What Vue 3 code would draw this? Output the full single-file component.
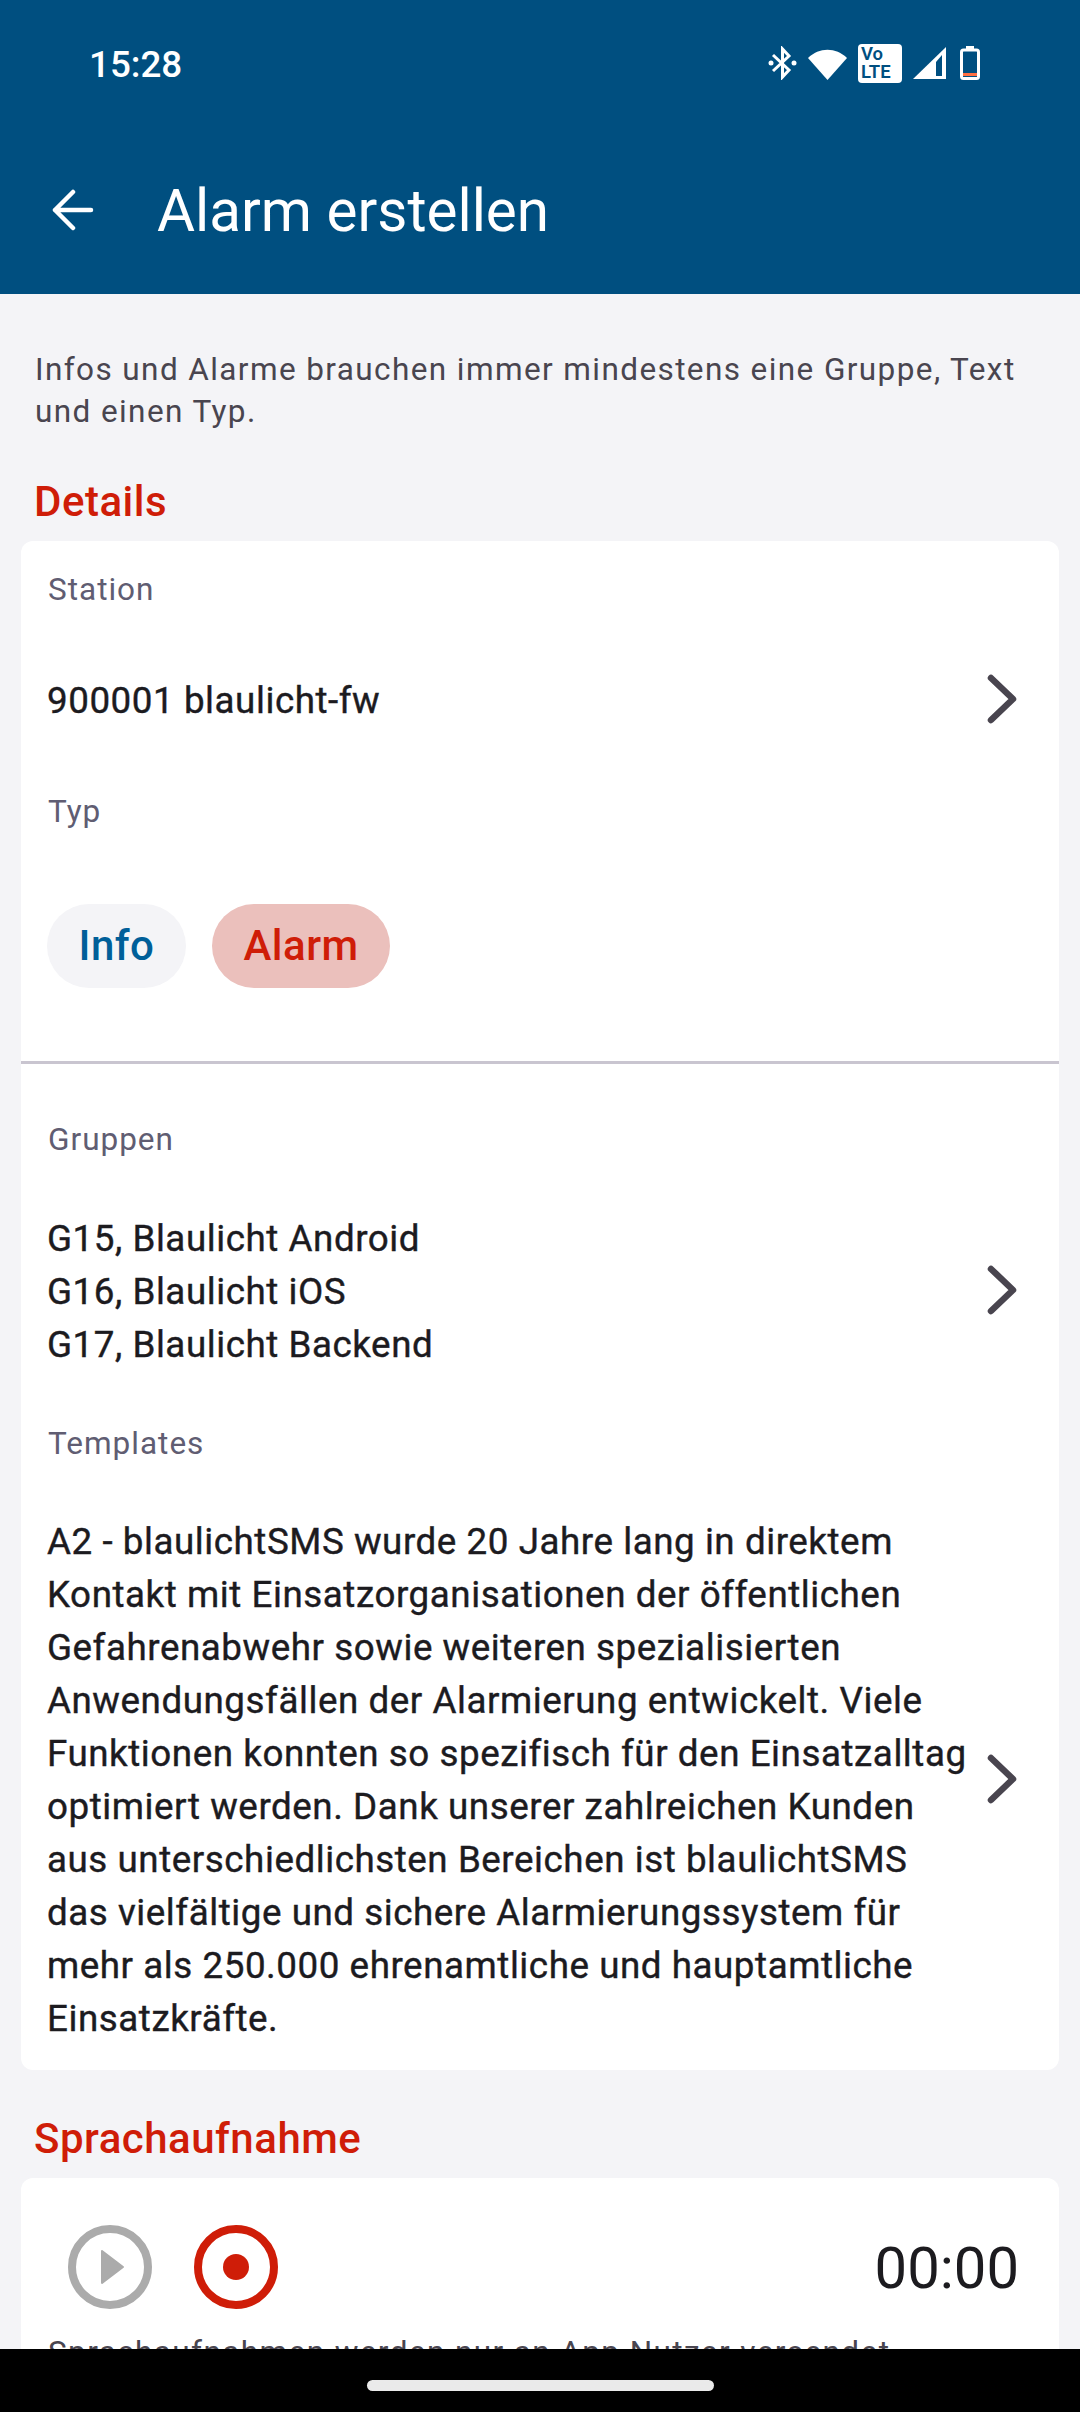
<script setup>
const groups = ['G15, Blaulicht Android', 'G16, Blaulicht iOS', 'G17, Blaulicht Backend']
const templateLines = [
  'A2 - blaulichtSMS wurde 20 Jahre lang in direktem',
  'Kontakt mit Einsatzorganisationen der öffentlichen',
  'Gefahrenabwehr sowie weiteren spezialisierten',
  'Anwendungsfällen der Alarmierung entwickelt. Viele',
  'Funktionen konnten so spezifisch für den Einsatzalltag',
  'optimiert werden. Dank unserer zahlreichen Kunden',
  'aus unterschiedlichsten Bereichen ist blaulichtSMS',
  'das vielfältige und sichere Alarmierungssystem für',
  'mehr als 250.000 ehrenamtliche und hauptamtliche',
  'Einsatzkräfte.'
]
</script>

<template>
  <div class="screen">
    <header class="appbar">
      <div class="status">
        <span class="time">15:28</span>
        <div class="status-icons">
          <svg viewBox="0 0 29 34" width="29" height="34">
            <path d="M5 9 L21 24 L14.5 31 L14.5 3 L21 10 L5 25" fill="none" stroke="#fff" stroke-width="3" />
            <circle cx="3" cy="17" r="2.5" fill="#fff" />
            <circle cx="26" cy="17" r="2.5" fill="#fff" />
          </svg>
          <svg viewBox="0 0 39 33" width="39" height="33">
            <path d="M0 11 C11 0 28 0 39 11 L19.5 33 Z" fill="#fff" />
          </svg>
          <div class="volte"><span>Vo</span><span>LTE</span></div>
          <svg viewBox="0 0 33 33" width="33" height="33">
            <path d="M0 32 L33 0 V32 Z" fill="#fff" />
            <path d="M23 15 L29 8 V29 H23 Z" fill="#004f80" />
          </svg>
          <svg class="batt" viewBox="0 0 20 34" width="20" height="34">
            <rect x="6" y="0" width="8" height="4" fill="#fff" />
            <rect x="1.5" y="4" width="17" height="28.5" rx="2" fill="none" stroke="#fff" stroke-width="3" />
            <rect x="3" y="27" width="14" height="3" fill="#ff7043" />
          </svg>
        </div>
      </div>
      <div class="toolbar">
        <svg class="back" viewBox="0 0 42 42" width="42" height="42">
          <path d="M3 21 H39 M21 3 L3 21 L21 39" fill="none" stroke="#fff" stroke-width="4.5" stroke-linecap="round" stroke-linejoin="round" />
        </svg>
        <h1>Alarm erstellen</h1>
      </div>
    </header>

    <main class="content">
      <p class="intro">Infos und Alarme brauchen immer mindestens eine Gruppe, Text<br />und einen Typ.</p>

      <h2>Details</h2>
      <section class="card">
        <div class="label first">Station</div>
        <div class="row station">
          <div class="value">900001 blaulicht-fw</div>
          <svg class="chev" viewBox="0 0 34 52" width="34" height="52"><path d="M6 5 L28 26 L6 47" /></svg>
        </div>
        <div class="label">Typ</div>
        <div class="chips">
          <span class="chip info">Info</span>
          <span class="chip alarm">Alarm</span>
        </div>
        <hr />
        <div class="label">Gruppen</div>
        <div class="row groups">
          <div class="value">
            <div v-for="g in groups" :key="g">{{ g }}</div>
          </div>
          <svg class="chev" viewBox="0 0 34 52" width="34" height="52"><path d="M6 5 L28 26 L6 47" /></svg>
        </div>
        <div class="label">Templates</div>
        <div class="row templates">
          <div class="value">
            <div v-for="l in templateLines" :key="l">{{ l }}</div>
          </div>
          <svg class="chev" viewBox="0 0 34 52" width="34" height="52"><path d="M6 5 L28 26 L6 47" /></svg>
        </div>
      </section>

      <h2>Sprachaufnahme</h2>
      <section class="card voice">
        <div class="player">
          <svg viewBox="0 0 84 84" width="84" height="84">
            <circle cx="42" cy="42" r="38" fill="none" stroke="#ababab" stroke-width="8" />
            <path d="M34 26 L55 42 L34 58 Z" fill="#ababab" stroke="#ababab" stroke-width="2" stroke-linejoin="round" />
          </svg>
          <svg viewBox="0 0 84 84" width="84" height="84">
            <circle cx="42" cy="42" r="38" fill="none" stroke="#cf1d08" stroke-width="8" />
            <circle cx="42" cy="42" r="13" fill="#cf1d08" />
          </svg>
          <span class="timer">00:00</span>
        </div>
        <div class="hint">Sprachaufnahmen werden nur an App Nutzer versendet</div>
      </section>
    </main>

    <div class="navbar"><div class="pill"></div></div>
  </div>
</template>

<style>
html, body { margin: 0; padding: 0; background: #f4f4f7; }
</style>

<style scoped>
.screen {
  width: 1080px;
  height: 2412px;
  overflow: hidden;
  position: relative;
  background: #f4f4f7;
  font-family: Roboto, sans-serif;
  color: #1c1b1f;
}

.appbar {
  background: #004f80;
  height: 294px;
  color: #fff;
}

.status {
  height: 126px;
  display: flex;
  align-items: center;
  justify-content: space-between;
  padding: 0 100px 0 89px;
}

.time {
  font-size: 36.75px;
  font-weight: 500;
  padding-top: 2px;
}

.status-icons {
  display: flex;
  align-items: center;
  gap: 11px;
}

.batt {
  margin-left: 3px;
}

.volte {
  width: 44px;
  height: 39px;
  background: #fff;
  border-radius: 4px;
  color: #004f80;
  font-size: 18.5px;
  font-weight: 600;
  line-height: 18px;
  display: flex;
  flex-direction: column;
  justify-content: center;
  padding-left: 3px;
  box-sizing: border-box;
}

.toolbar {
  display: flex;
  align-items: center;
  padding-left: 52px;
  height: 168px;
}

.toolbar h1 {
  margin: 0 0 0 63px;
  padding-top: 2px;
  font-size: 58.4px;
  font-weight: 400;
}

.content {
  padding: 0 21px;
}

.intro {
  margin: 0;
  padding: 55px 14px 0;
  font-size: 31.5px;
  line-height: 42px;
  letter-spacing: 1.4px;
  color: #49454f;
}

h2 {
  margin: 0;
  padding: 43px 13px 0;
  font-size: 42px;
  line-height: 52px;
  letter-spacing: 0.5px;
  font-weight: 500;
  color: #cf1d08;
}

.card {
  background: #fff;
  border-radius: 12px;
  margin-top: 13px;
  overflow: hidden;
}

.label {
  padding: 1px 27px 0;
  font-size: 31.5px;
  line-height: 40px;
  letter-spacing: 1px;
  color: #605d72;
}

.label.first {
  margin-top: 28px;
}

.row {
  display: flex;
  align-items: center;
  justify-content: space-between;
  padding: 0 40px 0 26px;
}

.value {
  font-size: 36.75px;
  line-height: 53px;
  font-weight: 400;
  letter-spacing: 0.55px;
  -webkit-text-stroke: 0.4px #1c1b1f;
  color: #1c1b1f;
  white-space: nowrap;
}

.chev {
  fill: none;
  stroke: #49454f;
  stroke-width: 6.5;
  stroke-linecap: round;
  stroke-linejoin: round;
  margin-bottom: 3px;
}

.station { height: 181px; }
.groups { padding-top: 52px; padding-bottom: 52px; }
.templates { padding-top: 51px; padding-bottom: 25px; }

.chips {
  display: flex;
  gap: 26px;
  padding: 72px 26px 73px;
}

.chip {
  height: 84px;
  line-height: 84px;
  border-radius: 42px;
  font-size: 42px;
  letter-spacing: 0.5px;
  font-weight: 500;
  padding: 0 31.5px;
}

.chip.info {
  background: #f4f4f7;
  color: #005f99;
}

.chip.alarm {
  background: #ebc0bc;
  color: #cf1d08;
}

hr {
  border: 0;
  height: 3px;
  background: #c9c5d0;
  margin: 0 0 55px;
}

.voice {
  height: 300px;
}

.player {
  display: flex;
  align-items: center;
  gap: 42px;
  padding: 47px 40px 0 47px;
}

.timer {
  margin-left: auto;
  padding-top: 2px;
  font-size: 58px;
  color: #1c1b1f;
}

.hint {
  margin-top: 23px;
  padding: 0 27px;
  font-size: 31.5px;
  line-height: 42px;
  letter-spacing: 1.4px;
  color: #49454f;
}

.navbar {
  position: absolute;
  left: 0;
  right: 0;
  bottom: 0;
  height: 63px;
  background: #000;
  display: flex;
  justify-content: center;
}

.pill {
  width: 347px;
  height: 11px;
  margin-top: 31px;
  border-radius: 6px;
  background: #eaeaea;
}
</style>
